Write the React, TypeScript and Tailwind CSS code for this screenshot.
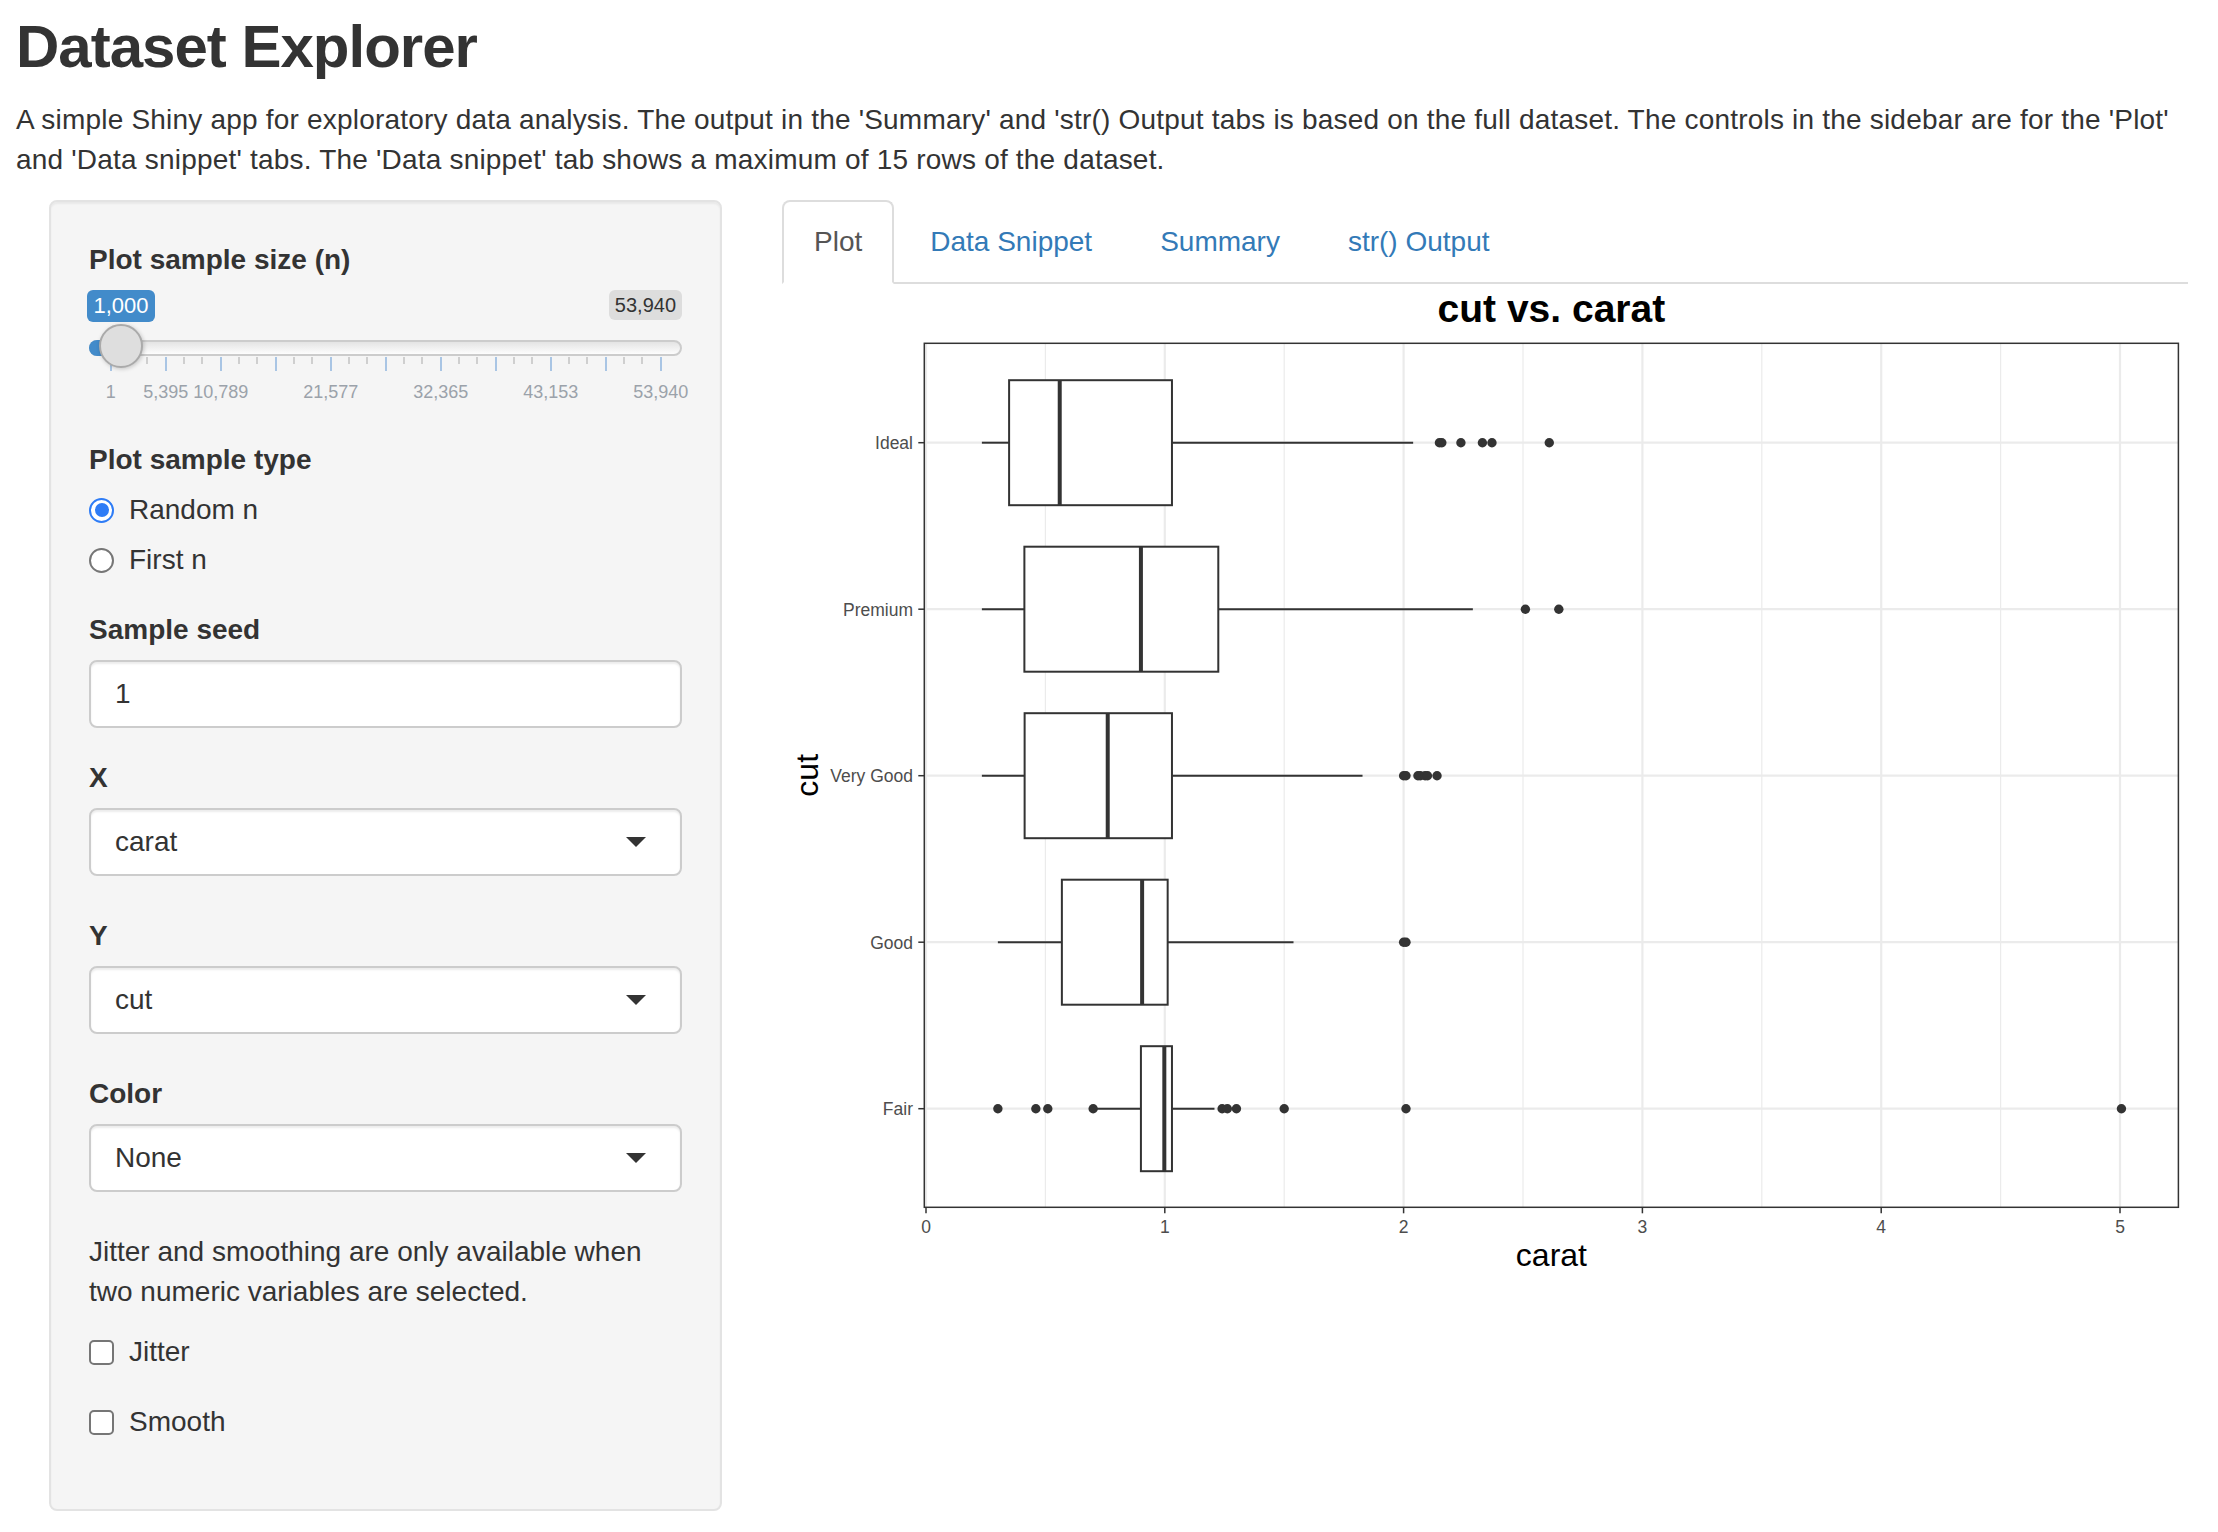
import React from "react";

type Row = {
  name: string;
  y: number;
  wl: number;
  q1: number;
  med: number;
  q3: number;
  wr: number;
  out: number[];
};

// plot geometry (svg coords, svg sits at page x=782, y=284)
const X0 = 144;
const SX = 238.8;
const xp = (v: number) => X0 + v * SX;
const PANEL = { l: 142.3, t: 59.3, r: 1396.4, b: 923.3 };
const HALF = 62.5;

const rows: Row[] = [
  { name: "Ideal", y: 158.7, wl: 0.234, q1: 0.348, med: 0.56, q3: 1.03, wr: 2.04, out: [2.15, 2.16, 2.24, 2.33, 2.37, 2.61] },
  { name: "Premium", y: 325.2, wl: 0.234, q1: 0.412, med: 0.9, q3: 1.224, wr: 2.29, out: [2.51, 2.65] },
  { name: "Very Good", y: 491.7, wl: 0.234, q1: 0.413, med: 0.761, q3: 1.03, wr: 1.828, out: [2.0, 2.01, 2.06, 2.07, 2.09, 2.1, 2.14] },
  { name: "Good", y: 658.2, wl: 0.301, q1: 0.569, med: 0.905, q3: 1.012, wr: 1.539, out: [2.0, 2.01] },
  { name: "Fair", y: 824.7, wl: 0.701, q1: 0.9, med: 0.998, q3: 1.03, wr: 1.208, out: [0.301, 0.46, 0.51, 0.7, 1.24, 1.262, 1.3, 1.5, 2.01, 5.006] },
];

function BoxPlot() {
  const major = [0, 1, 2, 3, 4, 5];
  const minor = [0.5, 1.5, 2.5, 3.5, 4.5];
  return (
    <svg width={1406} height={1000} className="block font-['Liberation_Sans',Arial,sans-serif]">
      <text x={769.4} y={37.7} textAnchor="middle" fontSize={39} fontWeight={700} fill="#000">
        cut vs. carat
      </text>
      <rect x={PANEL.l} y={PANEL.t} width={PANEL.r - PANEL.l} height={PANEL.b - PANEL.t} fill="#fff" />
      {minor.map((v) => (
        <line key={"mn" + v} x1={xp(v)} x2={xp(v)} y1={PANEL.t} y2={PANEL.b} stroke="#ebebeb" strokeWidth={1.2} />
      ))}
      {major.map((v) => (
        <line key={"mj" + v} x1={xp(v)} x2={xp(v)} y1={PANEL.t} y2={PANEL.b} stroke="#ebebeb" strokeWidth={2.2} />
      ))}
      {rows.map((r) => (
        <line key={"hg" + r.name} x1={PANEL.l} x2={PANEL.r} y1={r.y} y2={r.y} stroke="#ebebeb" strokeWidth={2.2} />
      ))}
      {rows.map((r) => (
        <g key={r.name} stroke="#333" fill="none">
          <line x1={xp(r.wl)} x2={xp(r.q1)} y1={r.y} y2={r.y} strokeWidth={2} />
          <line x1={xp(r.q3)} x2={xp(r.wr)} y1={r.y} y2={r.y} strokeWidth={2} />
          <rect x={xp(r.q1)} y={r.y - HALF} width={xp(r.q3) - xp(r.q1)} height={HALF * 2} fill="#fff" strokeWidth={2} />
          <line x1={xp(r.med)} x2={xp(r.med)} y1={r.y - HALF} y2={r.y + HALF} strokeWidth={4} />
          {r.out.map((o, i) => (
            <circle key={i} cx={xp(o)} cy={r.y} r={4.7} fill="#333" stroke="none" />
          ))}
        </g>
      ))}
      <rect x={PANEL.l} y={PANEL.t} width={PANEL.r - PANEL.l} height={PANEL.b - PANEL.t} fill="none" stroke="#333" strokeWidth={1.5} />
      {rows.map((r) => (
        <g key={"yl" + r.name}>
          <line x1={136.3} x2={PANEL.l} y1={r.y} y2={r.y} stroke="#333" strokeWidth={1.5} />
          <text x={131} y={r.y + 6.3} textAnchor="end" fontSize={17.5} fill="#4d4d4d">
            {r.name}
          </text>
        </g>
      ))}
      {major.map((v) => (
        <g key={"xl" + v}>
          <line x1={xp(v)} x2={xp(v)} y1={PANEL.b} y2={PANEL.b + 6} stroke="#333" strokeWidth={1.5} />
          <text x={xp(v)} y={949.3} textAnchor="middle" fontSize={17.5} fill="#4d4d4d">
            {v}
          </text>
        </g>
      ))}
      <text x={769.4} y={982} textAnchor="middle" fontSize={32} fill="#000">
        carat
      </text>
      <text x={36} y={491.3} textAnchor="middle" fontSize={32} fill="#000" transform="rotate(-90 36 491.3)">
        cut
      </text>
    </svg>
  );
}

function Label({ children, className = "" }: { children: React.ReactNode; className?: string }) {
  return <div className={"h-[40px] font-bold " + className}>{children}</div>;
}

function Select({ value }: { value: string }) {
  return (
    <div className="flex h-[68px] items-center justify-between rounded-[8px] border-2 border-[#cccccc] bg-white pl-[24px] pr-[34px] shadow-[inset_0_2px_2px_rgba(0,0,0,0.075)]">
      <span>{value}</span>
      <span className="h-0 w-0 border-x-[10px] border-t-[10px] border-x-transparent border-t-[#333333]" />
    </div>
  );
}

function Slider() {
  // grid: 0% at 21.8px, 100% at 571.8px
  const majors = Array.from({ length: 11 }, (_, i) => 21.8 + i * 55);
  const minors = majors.slice(0, 10).flatMap((m) => [m + 18.33, m + 36.67]);
  const labels: [string, number][] = [
    ["1", 0],
    ["5,395", 1],
    ["10,789", 2],
    ["21,577", 4],
    ["32,365", 6],
    ["43,153", 8],
    ["53,940", 10],
  ];
  return (
    <div className="relative mb-[30px] h-[120px]">
      <span className="absolute left-[-2px] top-0 flex h-[32px] w-[68px] items-center justify-center rounded-[6px] bg-[#428bca] text-[22px] leading-none text-white">
        1,000
      </span>
      <span className="absolute right-0 top-0 flex h-[30px] items-center rounded-[6px] bg-[#dddddd] px-[6px] text-[20px] leading-none text-[#333]">
        53,940
      </span>
      {minors.map((x) => (
        <span key={"m" + x} className="absolute top-[67px] h-[7px] w-[2px] bg-[#cfcfcf]" style={{ left: x - 1 }} />
      ))}
      {majors.map((x) => (
        <span key={"M" + x} className="absolute top-[67px] h-[14px] w-[2px] bg-[#a9c5e4]" style={{ left: x - 1 }} />
      ))}
      {labels.map(([t, i]) => (
        <span
          key={t}
          className="absolute top-[93px] -translate-x-1/2 text-[18px] leading-[18px] text-[#9ba2aa]"
          style={{ left: 21.8 + i * 55 }}
        >
          {t}
        </span>
      ))}
      <div className="absolute left-0 right-0 top-[50px] h-[16px] rounded-full border-2 border-[#cccccc] bg-gradient-to-b from-[#e4e4e4] to-[#fdfdfd]" />
      <div className="absolute left-0 top-[50px] h-[16px] w-[32px] rounded-l-full bg-[#428bca]" />
      <div className="absolute left-[10px] top-[34px] h-[44px] w-[44px] rounded-full border-2 border-[#aaaaaa] bg-[#dedede] shadow-[1px_1px_4px_rgba(0,0,0,0.2)]" />
    </div>
  );
}

function Radio({ checked, label }: { checked?: boolean; label: string }) {
  return (
    <div className="flex h-[40px] items-center">
      {checked ? (
        <span className="flex h-[25px] w-[25px] items-center justify-center rounded-full border-2 border-[#2e7cf6] bg-white">
          <span className="h-[14px] w-[14px] rounded-full bg-[#2e7cf6]" />
        </span>
      ) : (
        <span className="h-[25px] w-[25px] rounded-full border-2 border-[#767676] bg-white" />
      )}
      <span className="ml-[15px]">{label}</span>
    </div>
  );
}

function Check({ label }: { label: string }) {
  return (
    <div className="flex h-[40px] items-center">
      <span className="h-[25px] w-[25px] rounded-[5px] border-2 border-[#767676] bg-white" />
      <span className="ml-[15px]">{label}</span>
    </div>
  );
}

export default function App() {
  return (
    <main className="min-h-screen bg-white font-['Liberation_Sans',Arial,sans-serif] text-[28px] leading-[40px] text-[#333]">
      <header className="pl-[16px] pt-[14px]">
        <h2 className="mb-[20px] text-[60px] font-bold leading-[66px] tracking-[-1px]">Dataset Explorer</h2>
        <p className="mb-[20px] tracking-[0.2px]">
          <span className="block whitespace-nowrap">
            A simple Shiny app for exploratory data analysis. The output in the 'Summary' and 'str() Output tabs is
            based on the full dataset. The controls in the sidebar are for the 'Plot'
          </span>
          <span className="block whitespace-nowrap">
            and 'Data snippet' tabs. The 'Data snippet' tab shows a maximum of 15 rows of the dataset.
          </span>
        </p>
      </header>

      <div className="flex pl-[19px]">
        {/* sidebar */}
        <div className="w-[733px] shrink-0 px-[30px]">
          <form className="rounded-[8px] border-2 border-[#e3e3e3] bg-[#f5f5f5] px-[38px] pt-[38px] pb-[38px] shadow-[inset_0_2px_2px_rgba(0,0,0,0.05)]">
            <Label className="mb-[10px]">Plot sample size (n)</Label>
            <Slider />

            <Label className="mb-[10px]">Plot sample type</Label>
            <Radio checked label="Random n" />
            <div className="mt-[10px] mb-[30px]">
              <Radio label="First n" />
            </div>

            <Label className="mb-[10px]">Sample seed</Label>
            <div className="mb-[30px] flex h-[68px] items-center rounded-[8px] border-2 border-[#cccccc] bg-white pl-[24px] shadow-[inset_0_2px_2px_rgba(0,0,0,0.075)]">
              1
            </div>

            <Label className="mb-[10px]">X</Label>
            <div className="mb-[40px]">
              <Select value="carat" />
            </div>

            <Label className="mb-[10px]">Y</Label>
            <div className="mb-[40px]">
              <Select value="cut" />
            </div>

            <Label className="mb-[10px]">Color</Label>
            <div className="mb-[40px]">
              <Select value="None" />
            </div>

            <p className="mb-[20px]">
              Jitter and smoothing are only available when
              <br />
              two numeric variables are selected.
            </p>
            <Check label="Jitter" />
            <div className="mt-[30px] mb-[29px]">
              <Check label="Smooth" />
            </div>
          </form>
        </div>

        {/* main panel */}
        <div className="min-w-0 flex-1 px-[30px]">
          <ul className="flex border-b-2 border-[#dddddd]">
            <li className="mb-[-2px] mr-[4px] rounded-t-[8px] border-2 border-[#dddddd] border-b-white bg-white px-[30px] py-[20px] text-[#555]">
              Plot
            </li>
            <li className="mb-[-2px] mr-[4px] border-2 border-transparent px-[30px] py-[20px] text-[#337ab7]">
              Data Snippet
            </li>
            <li className="mb-[-2px] mr-[4px] border-2 border-transparent px-[30px] py-[20px] text-[#337ab7]">
              Summary
            </li>
            <li className="mb-[-2px] mr-[4px] border-2 border-transparent px-[30px] py-[20px] text-[#337ab7]">
              str() Output
            </li>
          </ul>
          <BoxPlot />
        </div>
      </div>
    </main>
  );
}
